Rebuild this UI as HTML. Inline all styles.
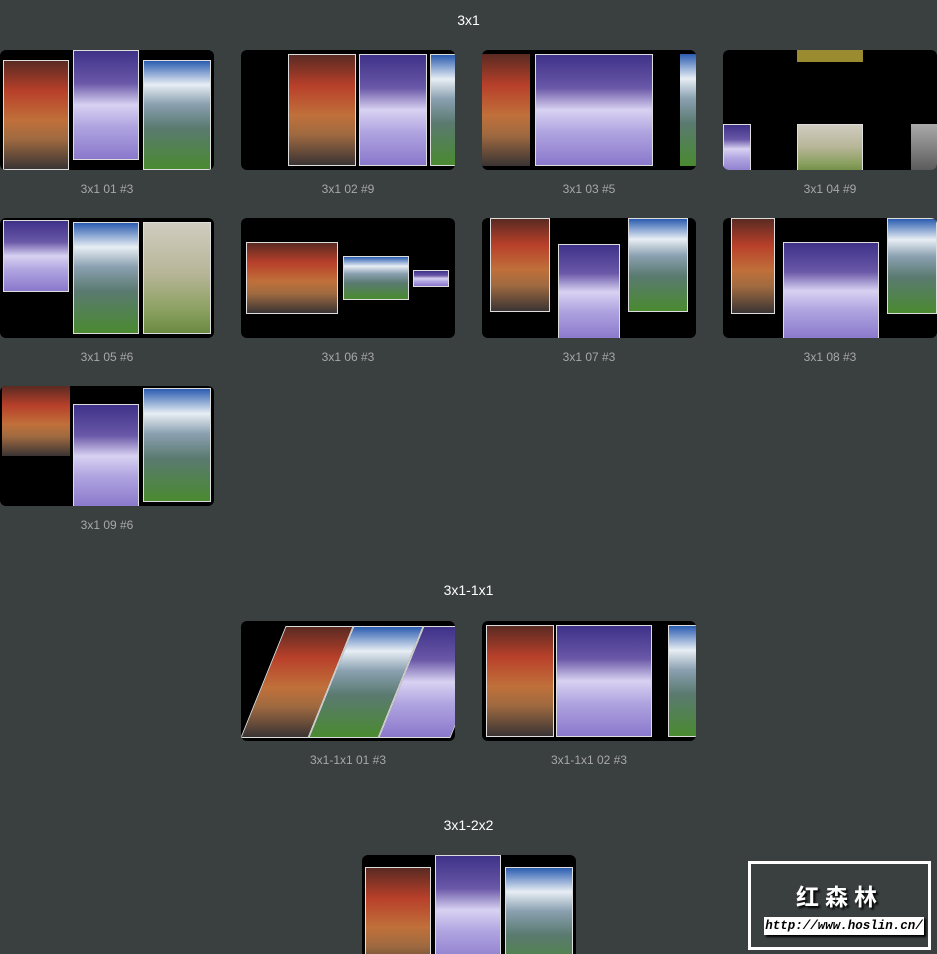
<!DOCTYPE html>
<html style="height:954px;overflow:hidden"><head><meta charset="utf-8">
<style>
html,body{margin:0;padding:0}
body{width:937px;height:954px;background:#3a3f3f;position:relative;overflow:hidden;font-family:"Liberation Sans",sans-serif}
.t{position:absolute;width:214px;height:120px;background:#000;border-radius:6px;overflow:hidden}
.t div{position:absolute;box-sizing:border-box}
.w{border:1.5px solid #ddd}
.r{background:linear-gradient(180deg,#5a2a22 0%,#b8402a 28%,#c0703a 55%,#a06a40 72%,#3a3434 100%)}
.p{background:linear-gradient(180deg,#3e3288 0%,#6a58a8 30%,#d8d2f2 50%,#b0a4e0 70%,#8a78cc 100%)}
.b{background:linear-gradient(180deg,#2a5cb0 0%,#e8eef4 22%,#8aa0b0 40%,#5a7a70 62%,#4a8a30 100%)}
.f{background:linear-gradient(180deg,#d0ccc0 0%,#b8b698 45%,#8aa060 80%,#6a8a40 100%)}
.o{background:#9a8a30}
.g{background:linear-gradient(#aaa,#555)}
.l{position:absolute;width:214px;text-align:center;color:#a8a8a8;font-size:12px}
.h{position:absolute;width:937px;text-align:center;color:#fff;font-size:14px}
</style></head><body>
<div class="h" style="top:12px">3x1</div>
<div class="h" style="top:582px">3x1-1x1</div>
<div class="h" style="top:817px">3x1-2x2</div>

<div class="t" style="left:0;top:50px"><div class="r w" style="left:3px;top:10px;width:66px;height:110px"></div><div class="p w" style="left:73px;top:0;width:66px;height:110px"></div><div class="b w" style="left:143px;top:10px;width:68px;height:110px"></div></div>
<div class="l" style="left:0;top:182px">3x1 01 #3</div>

<div class="t" style="left:241px;top:50px"><div class="r w" style="left:47px;top:4px;width:68px;height:112px"></div><div class="p w" style="left:118px;top:4px;width:68px;height:112px"></div><div class="b w" style="left:189px;top:4px;width:30px;height:112px"></div></div>
<div class="l" style="left:241px;top:182px">3x1 02 #9</div>

<div class="t" style="left:482px;top:50px"><div class="r" style="left:0;top:4px;width:48px;height:112px"></div><div class="p w" style="left:53px;top:4px;width:118px;height:112px"></div><div class="b" style="left:198px;top:4px;width:20px;height:112px"></div></div>
<div class="l" style="left:482px;top:182px">3x1 03 #5</div>

<div class="t" style="left:723px;top:50px"><div class="o" style="left:74px;top:0;width:66px;height:12px"></div><div class="f w" style="left:74px;top:74px;width:66px;height:50px"></div><div class="p w" style="left:0;top:74px;width:28px;height:50px"></div><div class="g" style="left:188px;top:74px;width:30px;height:50px"></div></div>
<div class="l" style="left:723px;top:182px">3x1 04 #9</div>

<div class="t" style="left:0;top:218px"><div class="p w" style="left:3px;top:2px;width:66px;height:72px"></div><div class="b w" style="left:73px;top:4px;width:66px;height:112px"></div><div class="f w" style="left:143px;top:4px;width:68px;height:112px"></div></div>
<div class="l" style="left:0;top:350px">3x1 05 #6</div>

<div class="t" style="left:241px;top:218px"><div class="r w" style="left:5px;top:24px;width:92px;height:72px"></div><div class="b w" style="left:102px;top:38px;width:66px;height:44px"></div><div class="p w" style="left:172px;top:52px;width:36px;height:17px"></div></div>
<div class="l" style="left:241px;top:350px">3x1 06 #3</div>

<div class="t" style="left:482px;top:218px"><div class="r w" style="left:8px;top:0;width:60px;height:94px"></div><div class="p w" style="left:76px;top:26px;width:62px;height:96px"></div><div class="b w" style="left:146px;top:0;width:60px;height:94px"></div></div>
<div class="l" style="left:482px;top:350px">3x1 07 #3</div>

<div class="t" style="left:723px;top:218px"><div class="r w" style="left:8px;top:0;width:44px;height:96px"></div><div class="p w" style="left:60px;top:24px;width:96px;height:98px"></div><div class="b w" style="left:164px;top:0;width:50px;height:96px"></div></div>
<div class="l" style="left:723px;top:350px">3x1 08 #3</div>

<div class="t" style="left:0;top:386px"><div class="r" style="left:2px;top:0;width:68px;height:70px"></div><div class="p w" style="left:73px;top:18px;width:66px;height:104px"></div><div class="b w" style="left:143px;top:2px;width:68px;height:114px"></div></div>
<div class="l" style="left:0;top:518px">3x1 09 #6</div>

<div class="t" style="left:241px;top:621px"><div class="r w" style="left:22px;top:5px;width:68px;height:112px;transform:skewX(-22deg)"></div><div class="b w" style="left:90px;top:5px;width:70px;height:112px;transform:skewX(-22deg)"></div><div class="p w" style="left:160px;top:5px;width:72px;height:112px;transform:skewX(-22deg)"></div></div>
<div class="l" style="left:241px;top:753px">3x1-1x1 01 #3</div>

<div class="t" style="left:482px;top:621px"><div class="r w" style="left:4px;top:4px;width:68px;height:112px"></div><div class="p w" style="left:74px;top:4px;width:96px;height:112px"></div><div class="b w" style="left:186px;top:4px;width:32px;height:112px"></div></div>
<div class="l" style="left:482px;top:753px">3x1-1x1 02 #3</div>

<div class="t" style="left:362px;top:855px;height:99px;border-radius:6px 6px 0 0"><div class="r w" style="left:3px;top:12px;width:66px;height:110px"></div><div class="p w" style="left:73px;top:0;width:66px;height:110px"></div><div class="b w" style="left:143px;top:12px;width:68px;height:110px"></div></div>

<div style="position:absolute;left:748px;top:861px;width:183px;height:89px;border:3px solid #fff;box-sizing:border-box;background:#3a3f3f">
 <div style="position:absolute;left:0;width:177px;top:14px;text-align:center;color:#fff;font-size:23px;font-weight:bold;letter-spacing:6px;font-family:'Noto Sans CJK SC',sans-serif;text-shadow:2px 2px 2px #000">红森林</div>
 <div style="position:absolute;left:13px;top:53px;width:160px;height:18px;background:#fff;box-shadow:2px 2px 2px #000;color:#000;font-family:'Liberation Mono',monospace;font-style:italic;font-weight:bold;font-size:12.5px;line-height:18px;text-align:center">http://www.hoslin.cn/</div>
</div>
</body></html>
